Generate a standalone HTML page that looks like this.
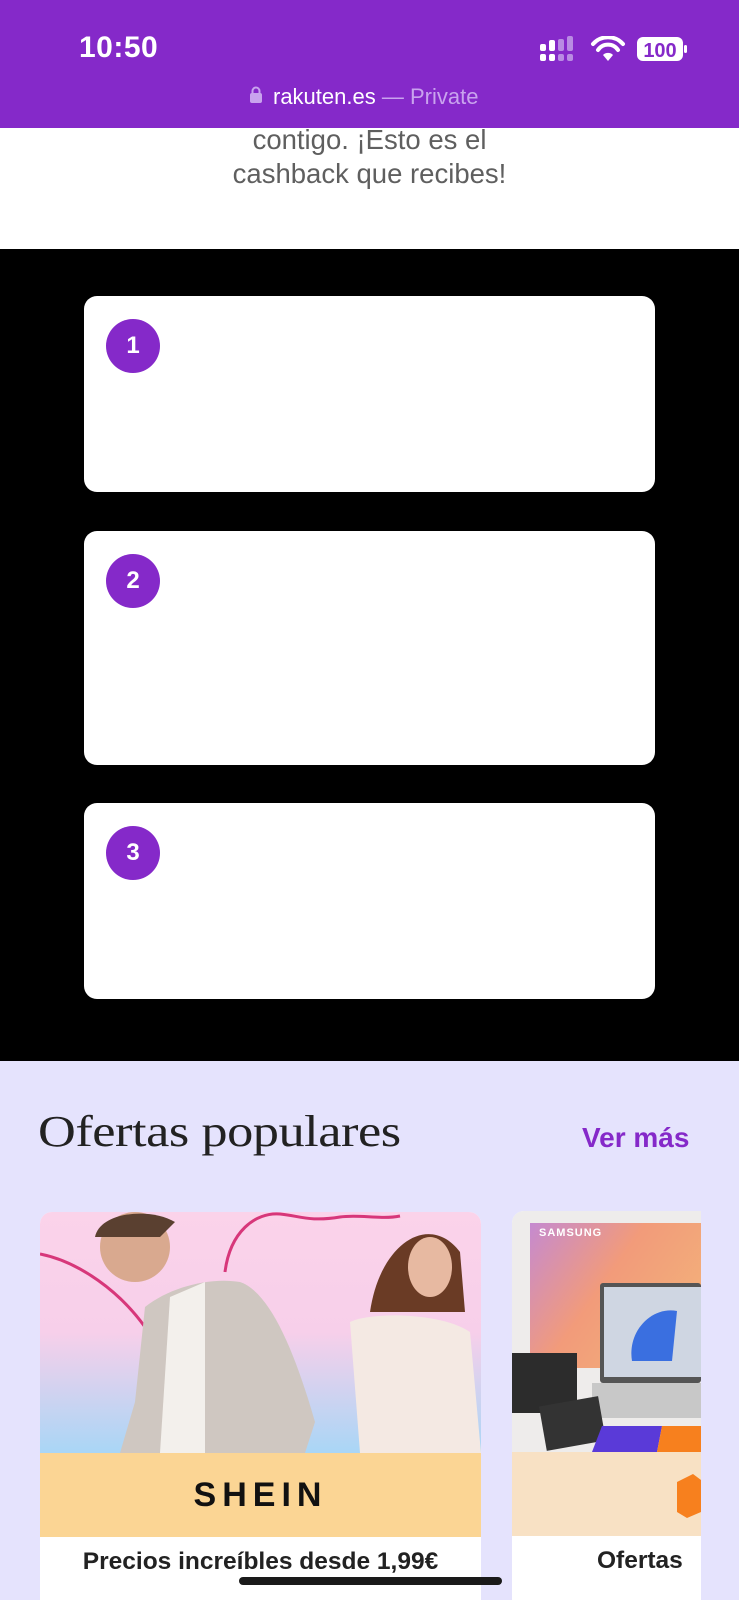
<!DOCTYPE html>
<html><head><meta charset="utf-8"><style>
*{margin:0;padding:0;box-sizing:border-box}
body{width:739px;height:1600px;overflow:hidden;background:#fff;font-family:"Liberation Sans",sans-serif;position:relative}
.abs{position:absolute}
.top{left:0;top:0;width:739px;height:128px;background:#8529c9}
.card{position:absolute;left:84px;width:571px;background:#fff;border-radius:13px}
.num{position:absolute;left:22px;top:23px;width:54px;height:54px;border-radius:50%;background:#8529c9;color:#fff;font-weight:bold;font-size:24px;line-height:54px;text-align:center}
</style></head><body>
<div class="abs" style="left:0;top:249px;width:739px;height:812px;background:#000"></div>
<div class="abs" style="left:0;top:1061px;width:739px;height:539px;background:#e5e3fd"></div>

<div class="abs" style="left:0;top:123px;width:739px;text-align:center;color:#5f5f5f;font-size:27.5px;line-height:34px">contigo. ¡Esto es el<br>cashback que recibes!</div>

<div class="abs top"></div>
<div class="abs" style="left:79px;top:31px;color:#fff;font-size:30px;font-weight:bold;letter-spacing:0.5px">10:50</div>
<svg class="abs" style="left:538px;top:36px" width="150" height="28" viewBox="0 0 150 28">
 <rect x="2" y="8" width="6" height="7" rx="2" fill="#fff"/><rect x="11" y="4" width="6" height="11" rx="2" fill="#fff"/>
 <rect x="20" y="3" width="6" height="12" rx="2" fill="#b98be3"/><rect x="29" y="0" width="6" height="15" rx="2" fill="#b98be3"/>
 <rect x="2" y="18" width="6" height="7" rx="2" fill="#fff"/><rect x="11" y="18" width="6" height="7" rx="2" fill="#fff"/>
 <rect x="20" y="18" width="6" height="7" rx="2" fill="#b98be3"/><rect x="29" y="18" width="6" height="7" rx="2" fill="#b98be3"/>
 <path d="M55 8a20 20 0 0 1 30 0" stroke="#fff" stroke-width="4" fill="none" stroke-linecap="round"/>
 <path d="M60 14a12 12 0 0 1 20 0" stroke="#fff" stroke-width="4" fill="none" stroke-linecap="round"/>
 <path d="M65 19l5 6 5-6a7 7 0 0 0-10 0z" fill="#fff"/>
 <rect x="99" y="1" width="46" height="24" rx="6" fill="#fff"/>
 <rect x="146" y="9" width="3" height="8" rx="1.5" fill="#fff"/>
 <text x="122" y="21" text-anchor="middle" font-family="Liberation Sans" font-weight="bold" font-size="20" fill="#8529c9">100</text>
</svg>
<svg class="abs" style="left:249px;top:86px" width="14" height="18"><rect x="1" y="7" width="12" height="10" rx="2" fill="#c9a3ee"/><path d="M3.5 8V5a3.5 3.5 0 0 1 7 0v3" stroke="#c9a3ee" stroke-width="2" fill="none"/></svg>
<div class="abs" style="left:273px;top:84px;font-size:22px;color:#fff">rakuten.es <span style="color:#c9a3ee">— Private</span></div>

<div class="card" style="top:296px;height:196px"><div class="num">1</div></div>
<div class="card" style="top:531px;height:234px"><div class="num">2</div></div>
<div class="card" style="top:803px;height:196px"><div class="num">3</div></div>

<div class="abs" style="left:38px;top:1106px;font-family:'Liberation Serif',serif;font-size:44px;color:#222;letter-spacing:-0.4px;transform:scaleX(1.19);transform-origin:0 0;white-space:nowrap">Ofertas populares</div>
<div class="abs" style="left:582px;top:1122px;font-size:28px;font-weight:bold;color:#8529c9">Ver más</div>

<div class="abs" style="left:40px;top:1212px;width:441px;height:400px;border-radius:12px;overflow:hidden;background:#fff">
 <svg width="441" height="241" viewBox="0 0 441 241" style="display:block">
  <defs><linearGradient id="g1" x1="0" y1="0" x2="0" y2="1"><stop offset="0" stop-color="#fbd3ea"/><stop offset="0.5" stop-color="#f7cfea"/><stop offset="1" stop-color="#a9d6f6"/></linearGradient></defs>
  <rect width="441" height="241" fill="url(#g1)"/>
  <path d="M0 42C40 50 80 80 105 115" stroke="#d7377a" stroke-width="3" fill="none"/>
  <path d="M185 60C190 20 215 0 240 2C260 4 270 10 300 5C320 2 340 8 360 4" stroke="#d7377a" stroke-width="3" fill="none"/>
  <path d="M105 95C130 75 170 65 200 70C230 80 255 140 275 210L265 241H80L95 190Z" fill="#cfc7c1"/>
  <path d="M130 85L165 70L165 241H120Z" fill="#f3f0ec"/>
  <ellipse cx="95" cy="35" rx="35" ry="35" fill="#d9a98f"/>
  <path d="M55 25C60 0 110 -5 135 10L120 25Z" fill="#5a4030"/>
  <path d="M330 100C340 30 390 0 420 40L425 100Z" fill="#6a3b25"/>
  <ellipse cx="390" cy="55" rx="22" ry="30" fill="#e7b9a1"/>
  <path d="M310 110C330 100 400 100 430 120L441 241H320Z" fill="#f4e9e3"/>
 </svg>
 <div style="height:84px;background:#fbd594;text-align:center;font-weight:bold;font-size:34px;letter-spacing:6px;line-height:84px;color:#111">SHEIN</div>
 <div style="text-align:center;font-weight:bold;font-size:24.5px;color:#222;padding-top:11px;white-space:nowrap">Precios increíbles desde 1,99€</div>
</div>

<div class="abs" style="left:512px;top:1211px;width:189px;height:400px;border-radius:12px 0 0 12px;overflow:hidden;background:#fff">
 <svg width="189" height="241" viewBox="0 0 189 241" style="display:block">
  <defs><linearGradient id="g2" x1="0" y1="0" x2="1" y2="0.6"><stop offset="0" stop-color="#c58ad0"/><stop offset="0.5" stop-color="#f29b7a"/><stop offset="1" stop-color="#f3b07a"/></linearGradient></defs>
  <rect width="189" height="241" fill="#eeeceb"/>
  <rect x="18" y="12" width="171" height="145" fill="url(#g2)"/>
  <text x="27" y="25" font-family="Liberation Sans" font-weight="bold" font-size="11" fill="#fff" letter-spacing="1">SAMSUNG</text>
  <rect x="88" y="72" width="101" height="100" rx="3" fill="#555"/>
  <rect x="92" y="76" width="97" height="90" fill="#cfd6e2"/>
  <path d="M120 150C115 120 140 95 165 100L160 150Z" fill="#3a6fe0"/>
  <rect x="80" y="172" width="109" height="35" fill="#c8c8c8"/>
  <rect x="0" y="142" width="65" height="60" fill="#2c2c2c"/>
  <rect x="30" y="190" width="60" height="45" fill="#333" transform="rotate(-10 60 210)"/>
  <path d="M90 215L150 215L145 241H80Z" fill="#5a3ad8"/>
  <path d="M150 215H189V241H145Z" fill="#f7801e"/>
 </svg>
 <div style="height:84px;background:#f8e1c4;position:relative"><svg style="position:absolute;left:161px;top:20px" width="30" height="48"><path d="M4 10L20 2L28 8L28 40L14 46L4 40Z" fill="#f7801e"/></svg></div>
 <div style="padding-left:85px;font-weight:bold;font-size:24.5px;color:#222;padding-top:11px;white-space:nowrap">Ofertas</div>
</div>

<div class="abs" style="left:239px;top:1577px;width:263px;height:8px;border-radius:4px;background:#1a1a1a"></div>
</body></html>
